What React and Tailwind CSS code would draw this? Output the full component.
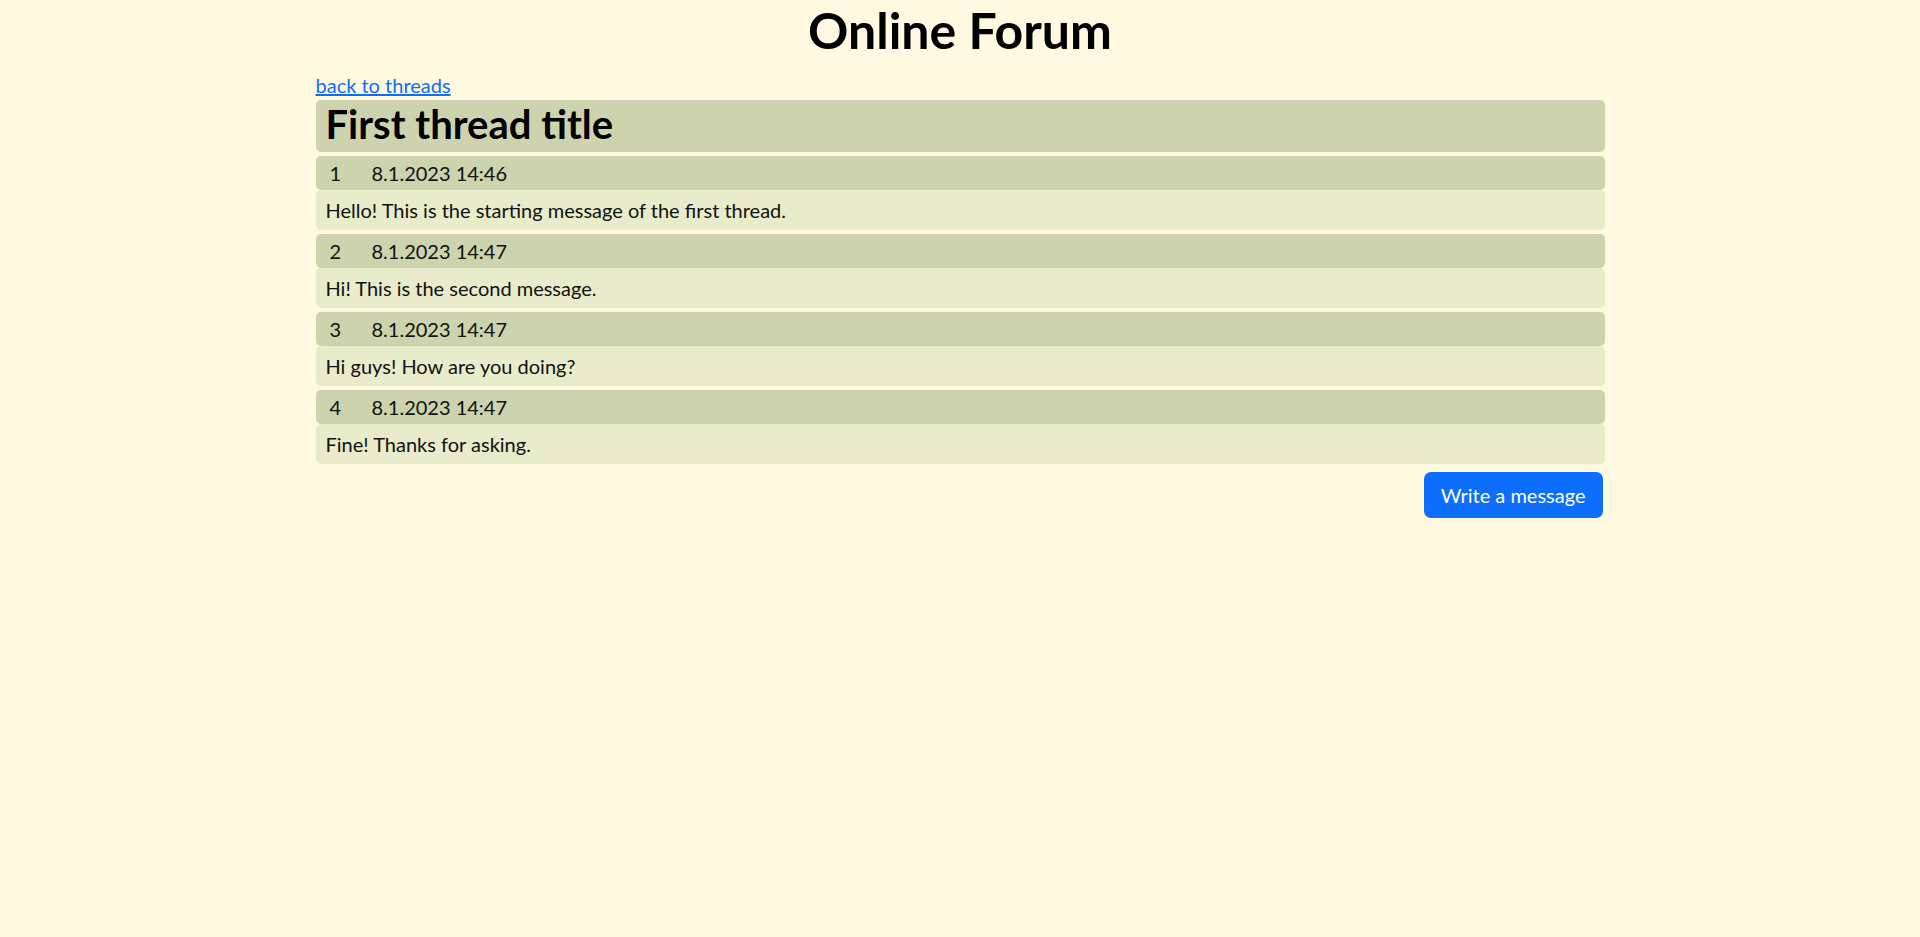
import React from "react";

const messages = [
  { id: 1, date: "8.1.2023 14:46", text: "Hello! This is the starting message of the first thread." },
  { id: 2, date: "8.1.2023 14:47", text: "Hi! This is the second message." },
  { id: 3, date: "8.1.2023 14:47", text: "Hi guys! How are you doing?" },
  { id: 4, date: "8.1.2023 14:47", text: "Fine! Thanks for asking." },
];

const App = () => {
  return (
    <div className="min-h-screen bg-[#fef9e0] text-[#111] font-['Lato',sans-serif] text-[20px] leading-[30px]">
      <h1 className="text-center text-[50px] leading-[60px] font-bold text-black mb-[10px]">
        Online Forum
      </h1>
      <div className="w-[1289px] mx-auto">
        <a href="#" className="text-[#0d6efd] underline">
          back to threads
        </a>
        <div className="bg-[#cdd4ad] rounded-[5px] px-[10px] pb-1">
          <h2 className="text-[40px] leading-[48px] font-bold text-black">First thread title</h2>
        </div>

        {messages.map((msg) => (
          <div key={msg.id} className="mt-1">
            <div className="flex bg-[#cdd4ad] rounded-[5px] pl-[14px] py-[2px]">
              <span className="w-[42px]">{msg.id}</span>
              <span>{msg.date}</span>
            </div>
            <div className="bg-[#e8ecca] rounded-[5px] px-[10px] py-[5px]">{msg.text}</div>
          </div>
        ))}

        <div className="flex justify-end mt-2 pr-[2px]">
          <button className="bg-[#0d6efd] text-white rounded-[7px] px-[17px] py-[8px] leading-[30px]">
            Write a message
          </button>
        </div>
      </div>
    </div>
  );
};

export default App;
